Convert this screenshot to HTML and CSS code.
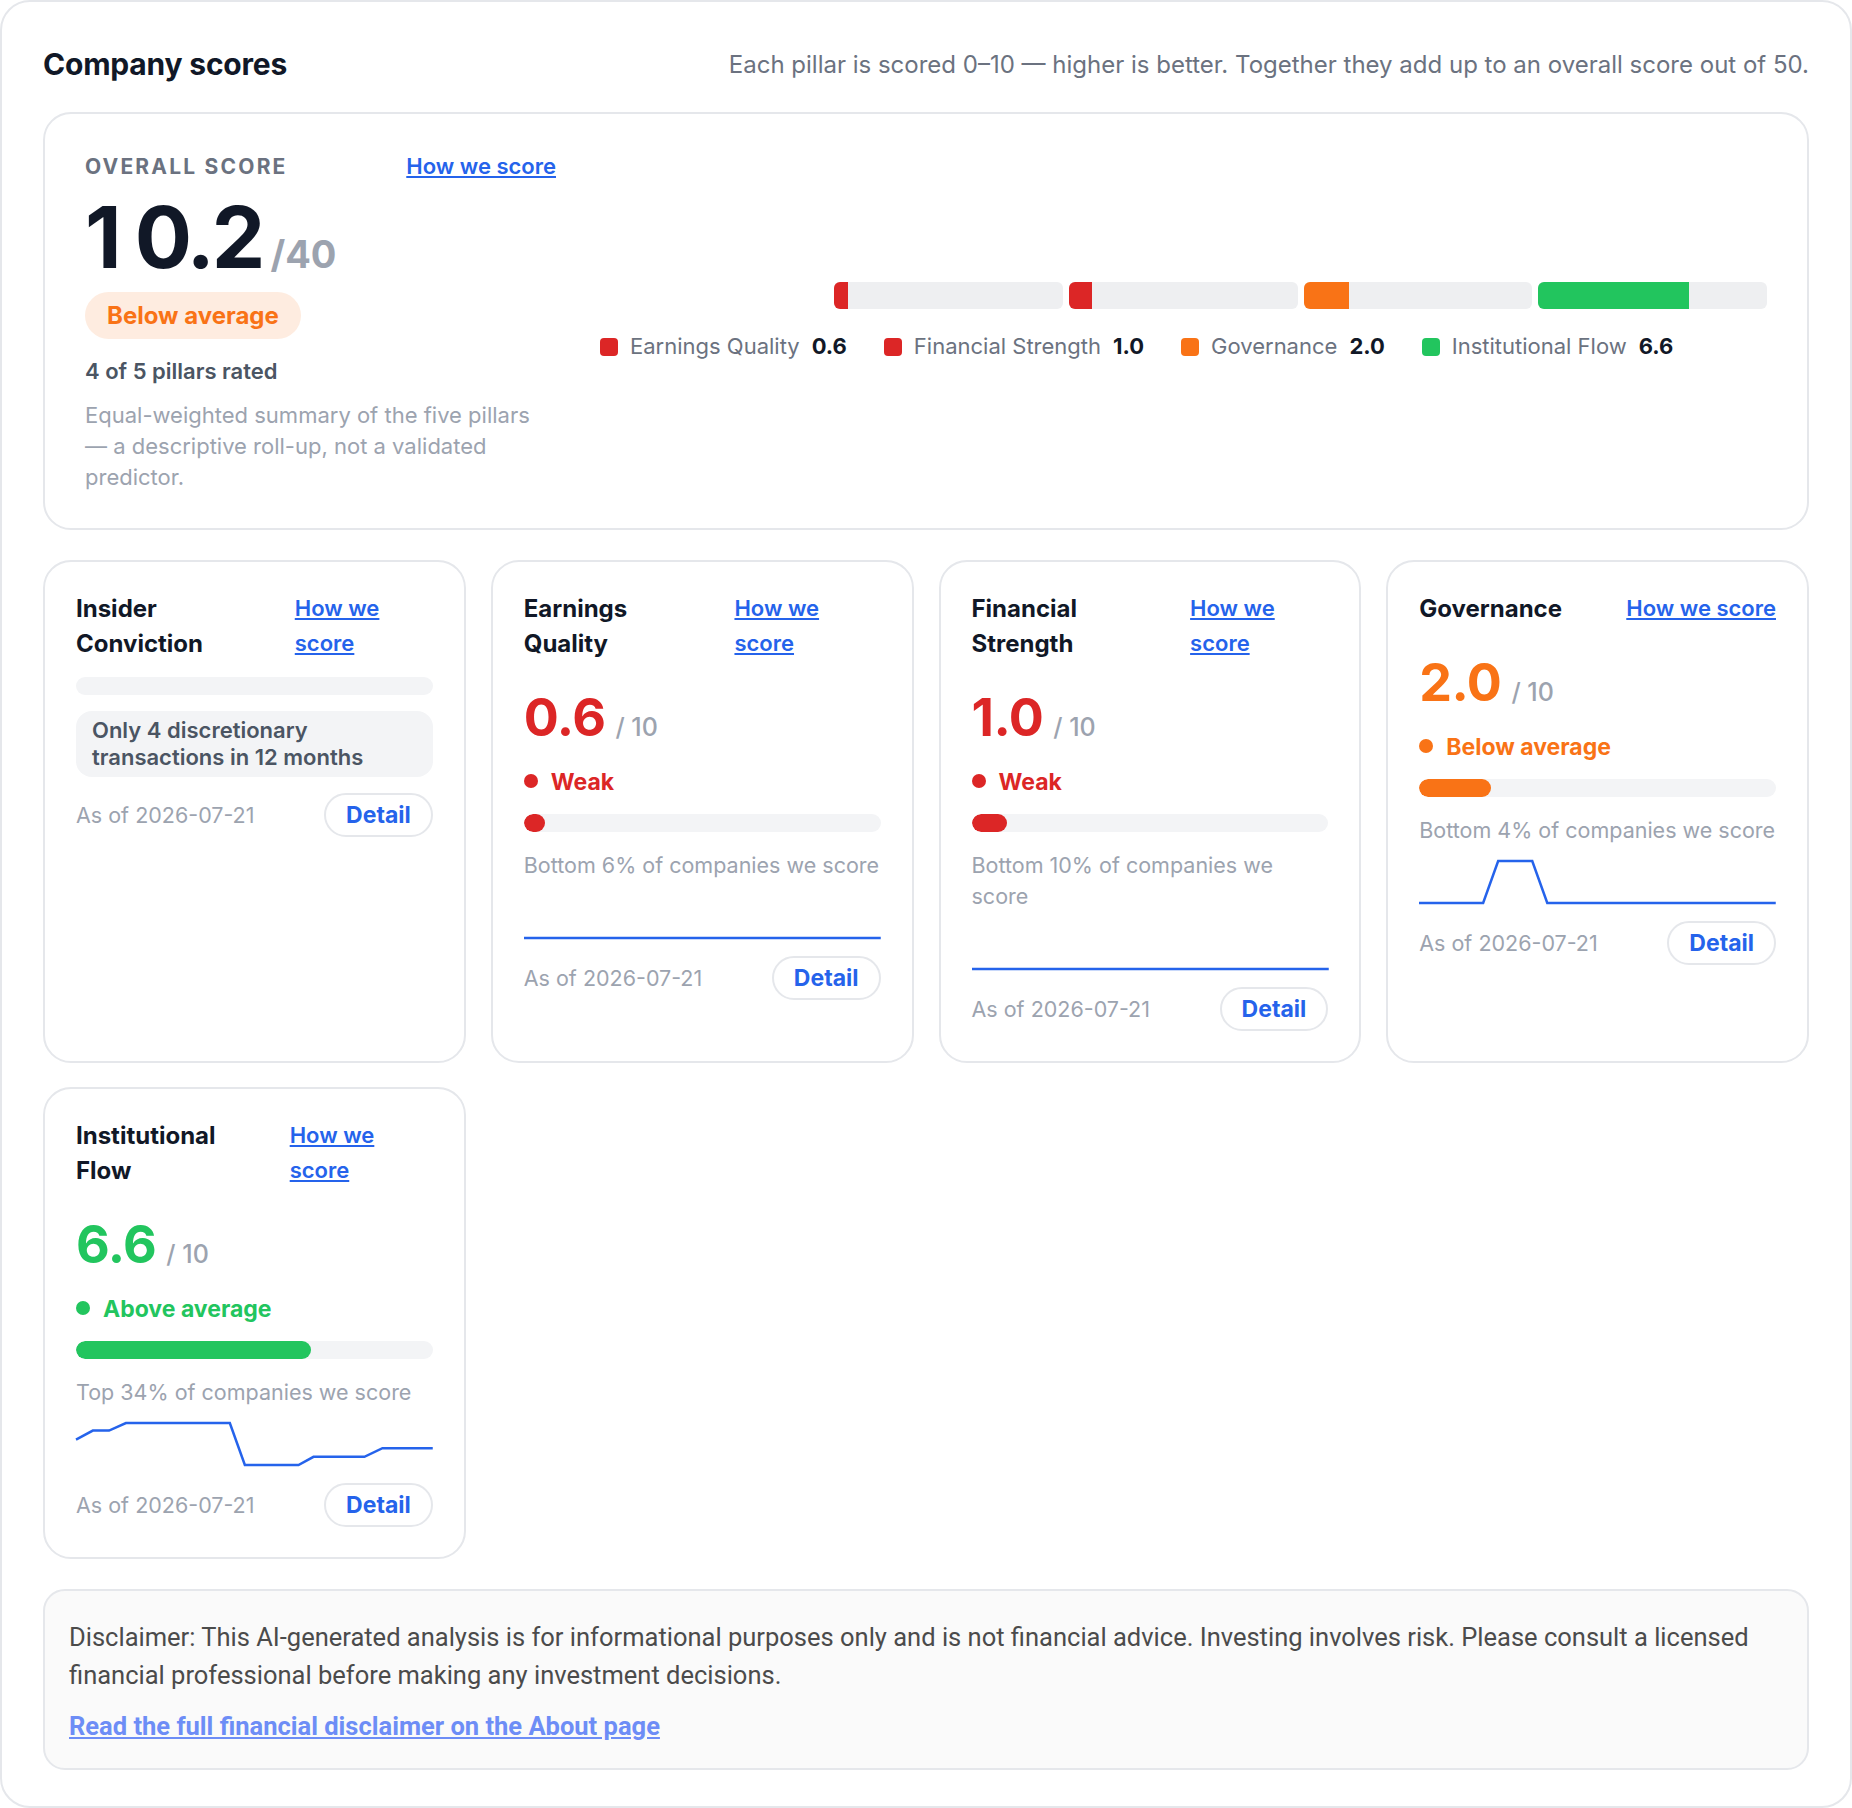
FILE: index.html
```html
<!DOCTYPE html>
<html lang="en">
  <head>
    <meta charset="UTF-8" />
    <meta name="viewport" content="width=device-width, initial-scale=1.0" />
    <title>Company scores</title>
    <link rel="stylesheet" href="styles.css">
  </head>
  <body>
    <section class="panel">
      <header class="panel-head">
        <h2>Company scores</h2>
        <p class="panel-note">Each pillar is scored 0–10 — higher is better. Together they add up to an overall score out of 50.</p>
      </header>

      <div class="overall">
        <div class="overall-left">
          <div class="overall-top">
            <span class="eyebrow">Overall score</span>
            <a href="#" class="how">How we score</a>
          </div>
          <div class="overall-score">
            <span class="big"><span class="one">1</span>0.2</span><span class="out-of">/40</span>
          </div>
          <span class="pill">Below average</span>
          <p class="rated">4 of 5 pillars rated</p>
          <p class="summary">Equal-weighted summary of the five pillars — a descriptive roll-up, not a validated predictor.</p>
        </div>

        <div class="overall-right">
          <div class="stack">
            <div class="seg"><span class="red" style="width: 6%"></span></div>
            <div class="seg"><span class="red" style="width: 10%"></span></div>
            <div class="seg"><span class="orange" style="width: 20%"></span></div>
            <div class="seg"><span class="green" style="width: 66%"></span></div>
          </div>
          <ul class="legend">
            <li><i class="red"></i>Earnings Quality <b>0.6</b></li>
            <li><i class="red"></i>Financial Strength <b>1.0</b></li>
            <li><i class="orange"></i>Governance <b>2.0</b></li>
            <li><i class="green"></i>Institutional Flow <b>6.6</b></li>
          </ul>
        </div>
      </div>

      <div class="pillars">
        <!-- insider: not rated -->
        <article class="card">
          <div class="card-head">
            <h3>Insider Conviction</h3>
            <a href="#" class="how">How we score</a>
          </div>
          <div class="empty-bar"></div>
          <div class="note">Only 4 discretionary transactions in 12 months</div>
          <div class="card-foot">
            <span class="asof">As of 2026-07-21</span>
            <button class="detail">Detail</button>
          </div>
        </article>

        <article class="card">
          <div class="card-head">
            <h3>Earnings Quality</h3>
            <a href="#" class="how">How we score</a>
          </div>
          <div class="score red-text"><span class="num">0.6</span><span class="of">/ 10</span></div>
          <div class="status red-text"><i class="red"></i>Weak</div>
          <div class="track"><span class="red" style="width: 6%"></span></div>
          <p class="pct">Bottom 6% of companies we score</p>
          <svg class="spark" viewBox="0 0 356 48" preserveAspectRatio="none">
            <path d="M0 45 H356" />
          </svg>
          <div class="card-foot">
            <span class="asof">As of 2026-07-21</span>
            <button class="detail">Detail</button>
          </div>
        </article>

        <article class="card">
          <div class="card-head">
            <h3>Financial Strength</h3>
            <a href="#" class="how">How we score</a>
          </div>
          <div class="score red-text"><span class="num">1.0</span><span class="of">/ 10</span></div>
          <div class="status red-text"><i class="red"></i>Weak</div>
          <div class="track"><span class="red" style="width: 10%"></span></div>
          <p class="pct">Bottom 10% of companies we score</p>
          <svg class="spark" viewBox="0 0 356 48" preserveAspectRatio="none">
            <path d="M0 45 H356" />
          </svg>
          <div class="card-foot">
            <span class="asof">As of 2026-07-21</span>
            <button class="detail">Detail</button>
          </div>
        </article>

        <article class="card">
          <div class="card-head">
            <h3>Governance</h3>
            <a href="#" class="how">How we score</a>
          </div>
          <div class="score orange-text"><span class="num">2.0</span><span class="of">/ 10</span></div>
          <div class="status orange-text"><i class="orange"></i>Below average</div>
          <div class="track"><span class="orange" style="width: 20%"></span></div>
          <p class="pct">Bottom 4% of companies we score</p>
          <svg class="spark" viewBox="0 0 356 48" preserveAspectRatio="none">
            <path d="M0 45 L64 45 L79 3 L113 3 L128 45 L356 45" />
          </svg>
          <div class="card-foot">
            <span class="asof">As of 2026-07-21</span>
            <button class="detail">Detail</button>
          </div>
        </article>

        <article class="card">
          <div class="card-head">
            <h3>Institutional Flow</h3>
            <a href="#" class="how">How we score</a>
          </div>
          <div class="score green-text"><span class="num">6.6</span><span class="of">/ 10</span></div>
          <div class="status green-text"><i class="green"></i>Above average</div>
          <div class="track"><span class="green" style="width: 66%"></span></div>
          <p class="pct">Top 34% of companies we score</p>
          <svg class="spark" viewBox="0 0 356 48" preserveAspectRatio="none">
            <path d="M0 19.6 L16.8 10.6 L33 10.6 L49.8 3 L153.5 3 L168.5 45 L222 45 L237 36.8 L287.8 36.8 L305.8 28.2 L356 28.2" />
          </svg>
          <div class="card-foot">
            <span class="asof">As of 2026-07-21</span>
            <button class="detail">Detail</button>
          </div>
        </article>
      </div>

      <div class="disclaimer">
        <p>Disclaimer: This AI-generated analysis is for informational purposes only and is not financial advice. Investing involves risk. Please consult a licensed financial professional before making any investment decisions.</p>
        <a href="#">Read the full financial disclaimer on the About page</a>
      </div>
    </section>
  </body>
</html>
```

FILE: styles.css
```css
/* styles.css */
body {
  margin: 0;
  font-family: Inter, "Noto Sans", sans-serif;
  background: #fff;
  color: #111827;
}

.panel {
  box-sizing: border-box;
  width: 100%;
  border: 2px solid #e5e7eb;
  border-radius: 30px;
  padding: 40px 41px 36px;
}

.panel-head {
  display: flex;
  justify-content: space-between;
  align-items: center;
  height: 44px;
  margin-bottom: 26px;
}

.panel-head h2 {
  margin: 0;
  font-size: 30px;
  font-weight: 700;
  letter-spacing: -0.2px;
}

.panel-note {
  margin: 0;
  font-size: 24px;
  color: #6b7280;
}

.how {
  color: #2563eb;
  font-size: 22px;
  font-weight: 600;
  line-height: 35px;
}

/* overall card */
.overall {
  display: flex;
  gap: 44px;
  border: 2px solid #e5e7eb;
  border-radius: 28px;
  padding: 37px 40px 35px;
}

.overall-left {
  width: 471px;
  flex-shrink: 0;
}

.overall-top {
  display: flex;
  justify-content: space-between;
  align-items: center;
  height: 31px;
}

.eyebrow {
  font-size: 21px;
  font-weight: 700;
  letter-spacing: 2.2px;
  text-transform: uppercase;
  color: #6b7280;
}

.overall-top .how {
  line-height: 31px;
}

.overall-score {
  display: flex;
  align-items: baseline;
  gap: 8px;
  margin-top: 13px;
  line-height: 86px;
  height: 86px;
}

.big {
  font-size: 85px;
  font-weight: 700;
  letter-spacing: -3px;
  color: #111827;
}

.big .one {
  margin-right: 16px;
}

.out-of {
  font-size: 38px;
  font-weight: 700;
  color: #9ca3af;
}

.pill {
  display: inline-block;
  margin-top: 11px;
  padding: 0 22px;
  line-height: 47px;
  border-radius: 24px;
  background: #feece0;
  color: #f97316;
  font-size: 24px;
  font-weight: 700;
}

.rated {
  margin: 17px 0 0;
  font-size: 22px;
  line-height: 31px;
  font-weight: 600;
  color: #4b5563;
}

.summary {
  margin: 13px 0 0;
  font-size: 22px;
  line-height: 31px;
  color: #9ca3af;
}

.overall-right {
  flex: 1;
  display: flex;
  flex-direction: column;
  justify-content: center;
}

.stack {
  align-self: flex-end;
  width: 933px;
  height: 27px;
  display: flex;
  gap: 6px;
}

.seg {
  flex: 1;
  background: #eeeff1;
  border-radius: 6px;
  overflow: hidden;
}

.seg span {
  display: block;
  height: 100%;
}

.legend {
  list-style: none;
  margin: 22px 0 0;
  padding: 0;
  display: flex;
  gap: 37px;
  font-size: 22px;
  line-height: 31px;
  color: #6b7280;
}

.legend li {
  display: flex;
  align-items: center;
}

.legend i {
  width: 18px;
  height: 18px;
  border-radius: 4px;
  margin-right: 12px;
}

.legend b {
  margin-left: 12px;
  color: #111827;
  font-weight: 700;
}

.red { background: #dc2626; }
.orange { background: #f97316; }
.green { background: #22c55e; }
.red-text { color: #dc2626; }
.orange-text { color: #f97316; }
.green-text { color: #22c55e; }

/* pillar cards */
.pillars {
  display: grid;
  grid-template-columns: repeat(4, 1fr);
  gap: 24px 25px;
  margin-top: 30px;
}

.card {
  display: flex;
  flex-direction: column;
  border: 2px solid #e5e7eb;
  border-radius: 28px;
  padding: 29px 31px 30px;
}

.card-head {
  display: flex;
  justify-content: space-between;
  gap: 22px;
}

.card-head h3 {
  margin: 0;
  font-size: 24px;
  line-height: 35px;
  font-weight: 700;
  color: #111827;
}

.empty-bar {
  margin-top: 16px;
  height: 18px;
  border-radius: 9px;
  background: #f3f4f6;
}

.note {
  margin-top: 16px;
  padding: 6px 16px;
  border-radius: 16px;
  background: #f3f4f6;
  color: #4b5563;
  font-size: 22px;
  line-height: 27px;
  font-weight: 600;
}

.score {
  margin-top: 31px;
  display: flex;
  align-items: baseline;
  gap: 10px;
  line-height: 52px;
  height: 52px;
}

.score .num {
  font-size: 52px;
  font-weight: 700;
  letter-spacing: -0.5px;
}

.score .of {
  font-size: 25px;
  font-weight: 500;
  color: #9ca3af;
}

.status {
  margin-top: 23px;
  display: flex;
  align-items: center;
  gap: 13px;
  font-size: 23px;
  line-height: 31px;
  font-weight: 700;
}

.status i {
  width: 14px;
  height: 14px;
  border-radius: 50%;
  margin-top: -4px;
}

.track {
  margin-top: 16px;
  height: 18px;
  border-radius: 9px;
  background: #f3f4f6;
  overflow: hidden;
}

.track span {
  display: block;
  height: 100%;
  border-radius: 9px;
}

.pct {
  margin: 18px 0 0;
  font-size: 21.5px;
  line-height: 31px;
  color: #9ca3af;
}

.spark {
  display: block;
  margin-top: 12px;
  width: 100%;
  height: 48px;
  overflow: visible;
}

.spark path {
  fill: none;
  stroke: #2563eb;
  stroke-width: 2.5;
  vector-effect: non-scaling-stroke;
}

.card-foot {
  margin-top: 16px;
  display: flex;
  justify-content: space-between;
  align-items: center;
}

.spark + .card-foot {
  margin-top: 15px;
}

.asof {
  font-size: 21.5px;
  color: #9ca3af;
}

.detail {
  height: 44px;
  padding: 0 20px;
  border: 2px solid #e5e7eb;
  border-radius: 22px;
  background: #fff;
  color: #2563eb;
  font-family: inherit;
  font-size: 23px;
  font-weight: 700;
  cursor: pointer;
}

/* disclaimer */
.disclaimer {
  margin-top: 30px;
  border: 2px solid #e5e7eb;
  border-radius: 22px;
  background: #fafafa;
  padding: 27px 24px 26px;
  font-family: Roboto, "Noto Sans", sans-serif;
}

.disclaimer p {
  margin: 0;
  font-size: 25.5px;
  line-height: 38px;
  color: #4b4b4b;
}

.disclaimer a {
  display: inline-block;
  margin-top: 16px;
  font-size: 25.5px;
  line-height: 32px;
  font-weight: 700;
  color: #6d8df6;
}
```
